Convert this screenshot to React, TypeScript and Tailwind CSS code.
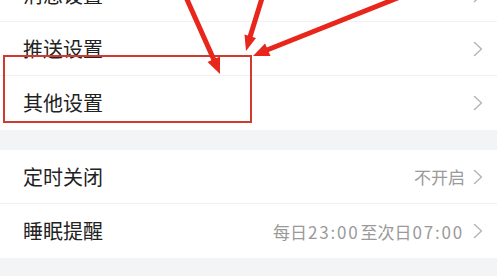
import React from "react";

type Row = { label: string; value?: React.ReactNode };

const Chevron = () => (
  <svg width="10" height="16" viewBox="0 0 10 16" className="shrink-0">
    <polyline points="1.5,1.5 8.5,8 1.5,14.5" fill="none" stroke="#b4b4b4" strokeWidth="1.4" strokeLinejoin="round" strokeLinecap="round" />
  </svg>
);

function SettingRow({ row, last }: { row: Row; last?: boolean }) {
  return (
    <div className={`flex h-[54px] items-center justify-between pl-[23px] pr-[14px] ${last ? "" : "border-b border-[#f1f1f1]"}`}>
      <span className="text-[20px] leading-none text-[#222]">{row.label}</span>
      <div className="flex items-center gap-[8px]">
        {row.value && <span className="text-[17px] leading-none text-[#9a9a9a]">{row.value}</span>}
        <Chevron />
      </div>
    </div>
  );
}

const Num = ({ children }: { children: string }) => (
  <span className="mx-[1px] tracking-[1.8px]">{children}</span>
);

const groupA: Row[] = [{ label: "消息设置" }, { label: "推送设置" }, { label: "其他设置" }];
const groupB: Row[] = [
  { label: "定时关闭", value: "不开启" },
  {
    label: "睡眠提醒",
    value: (
      <>
        每日<Num>23:00</Num>至次日<Num>07:00</Num>
      </>
    ),
  },
];

export default function App() {
  return (
    <div
      className="relative h-[280px] w-[497px] overflow-hidden bg-[#f3f4f6]"
      style={{ fontFamily: "'Noto Sans CJK SC', 'Noto Sans', sans-serif" }}
    >
      <div className="-mt-[32px] bg-white">
        {groupA.map((r, i) => (
          <SettingRow key={r.label} row={r} last={i === groupA.length - 1} />
        ))}
      </div>
      <div className="h-[20px]" />
      <div className="bg-white">
        {groupB.map((r, i) => (
          <SettingRow key={r.label} row={r} last={i === groupB.length - 1} />
        ))}
      </div>
      <div className="h-[18px]" />
      <div className="h-[20px] bg-white" />

      {/* highlight box */}
      <div className="absolute left-[3px] top-[55px] h-[68px] w-[249px] border-2 border-[#cf3b2f]" />

      {/* arrows */}
      <svg className="absolute left-0 top-0" width="497" height="280" viewBox="0 0 497 280">
        <g stroke="#e8261c" strokeWidth="5" strokeLinecap="round">
          <line x1="185" y1="-5" x2="214" y2="60" />
          <line x1="263" y1="-5" x2="250" y2="37" />
          <line x1="400" y1="-3" x2="267" y2="50" />
        </g>
        <g fill="#e8261c">
          <polygon points="220,74 207.5,62 220,56.5" />
          <polygon points="246,51 244.5,34.5 256,38" />
          <polygon points="253,56 265,43.5 270.5,56" />
        </g>
      </svg>
    </div>
  );
}
